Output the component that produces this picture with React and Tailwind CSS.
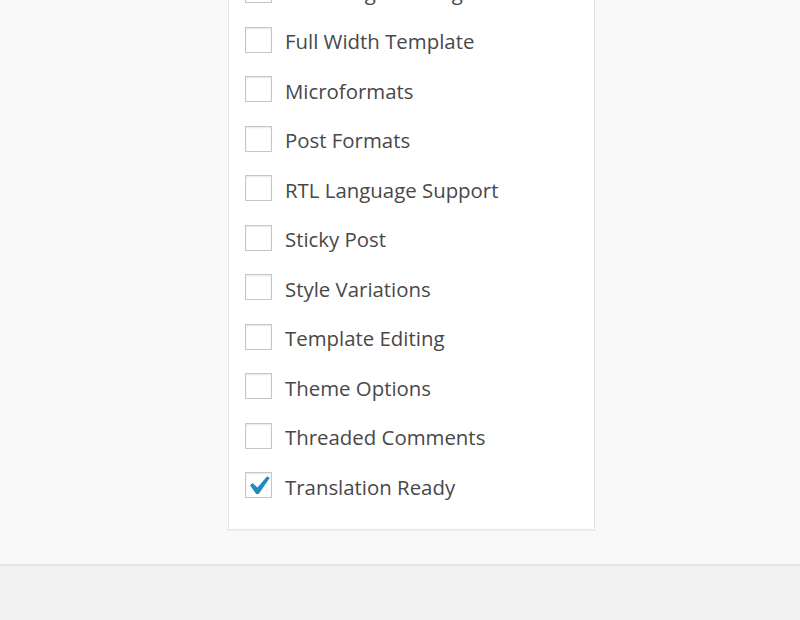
import React from 'react';

const features = [
  { label: "Front Page Posting", checked: false },
  { label: "Full Width Template", checked: false },
  { label: "Microformats", checked: false },
  { label: "Post Formats", checked: false },
  { label: "RTL Language Support", checked: false },
  { label: "Sticky Post", checked: false },
  { label: "Style Variations", checked: false },
  { label: "Template Editing", checked: false },
  { label: "Theme Options", checked: false },
  { label: "Threaded Comments", checked: false },
  { label: "Translation Ready", checked: true },
];

const Checkbox = ({ checked }) => (
  <span className="relative block w-[27px] h-[26px] shrink-0 bg-white border-[1.5px] border-[#c3c7cb] shadow-[inset_0_1px_2px_rgba(0,0,0,0.1)]">
    {checked && (
      <svg
        viewBox="0 0 20 20"
        className="absolute left-[-7px] top-[-6px] w-[38px] h-[38px]"
      >
        <path
          fill="#1e8cbe"
          d="M14.83 4.89l1.34.94-5.81 8.38H9.02L5.78 9.67l1.34-1.25 2.57 2.4z"
        />
      </svg>
    )}
  </span>
);

const App = () => {
  return (
    <div className="h-[620px] w-[800px] overflow-hidden flex flex-col bg-[#f8f8f8] font-['Open_Sans',sans-serif]">
      {/* Feature filter panel */}
      <div className="flex-1">
        <div className="ml-[228px] w-[367px] mt-[-24px] bg-white border border-[#e3e3e3] shadow-[0_1px_1px_rgba(0,0,0,0.04)] pl-[16px] pb-[31px]">
          <ul className="flex flex-col gap-[23.5px]">
            {features.map((f) => (
              <li key={f.label} className="flex items-center gap-[13px] h-[26px]">
                <Checkbox checked={f.checked} />
                <span className="text-[20.4px] leading-[26px] text-[#484848] pt-[3px] whitespace-nowrap">{f.label}</span>
              </li>
            ))}
          </ul>
        </div>
      </div>
      {/* Footer band */}
      <div className="h-[56px] bg-[#f1f1f1] border-t-2 border-[#e6e6e6]" />
    </div>
  );
};

export default App;
